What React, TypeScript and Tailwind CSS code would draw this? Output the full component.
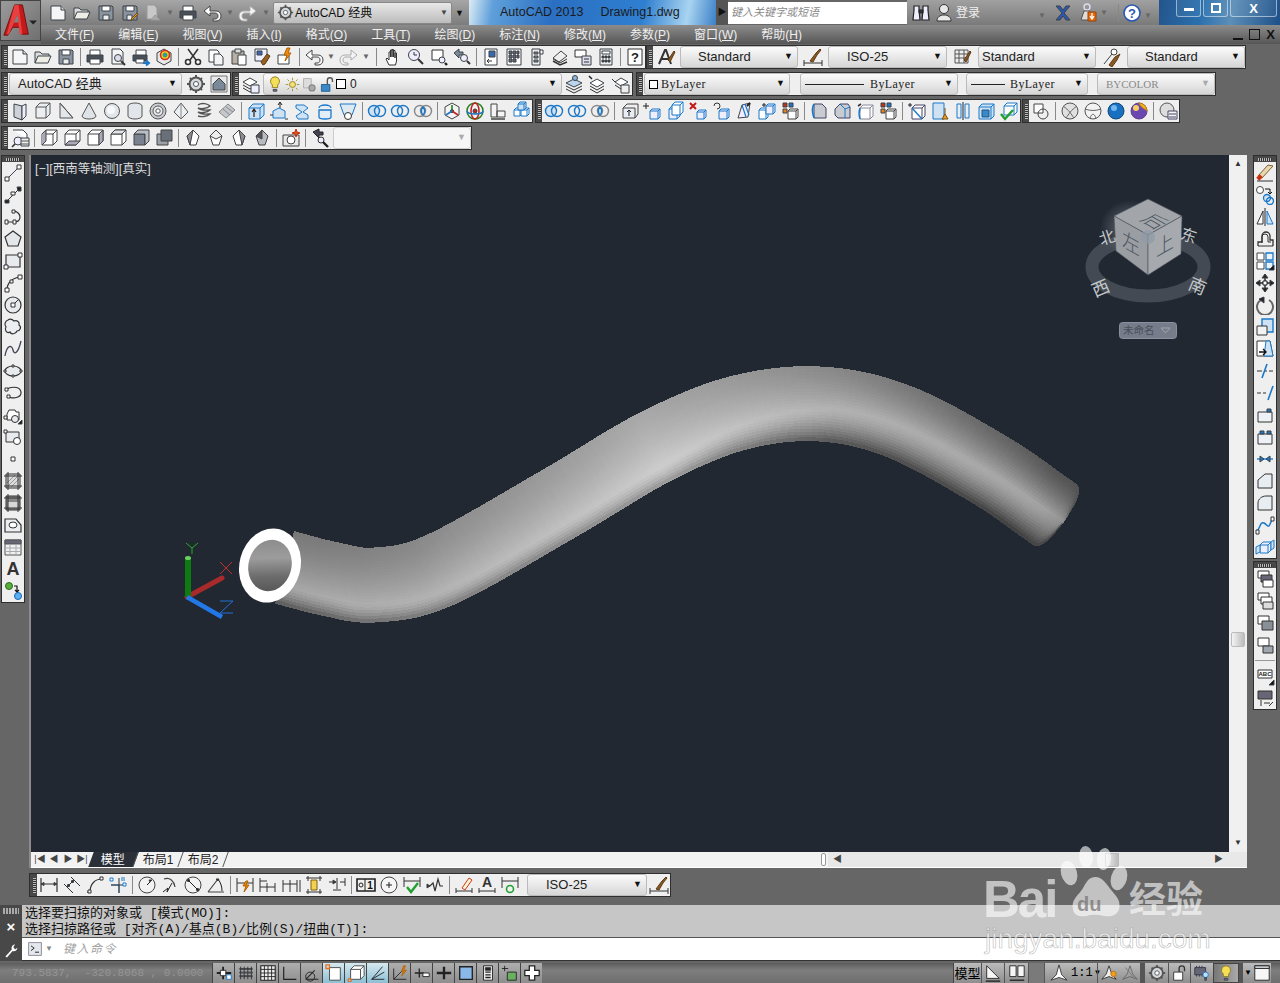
import type { ReactNode } from "react";

type Seg = [string, string?, string?, number?];

const c = (x: number, y: number, r: number) => `M${x - r} ${y}a${r} ${r} 0 1 0 ${2 * r} 0a${r} ${r} 0 1 0 ${-2 * r} 0z`;
const cube = (x: number, y: number, w: number, h: number, d: number) =>
  `M${x} ${y}h${w}v${h}h${-w}zM${x} ${y}l${d} ${-d}h${w}v${h}l${-d} ${d}M${x + w} ${y}l${d} ${-d}`;
const B = "#1b78c8";
const brush: Seg[] = [["M11 13l6-9 1 1-5 10z", "#8a5a24", "#5a3a14"]];
const venn = (f = "none"): Seg[] => [[c(7, 10, 5.5), f, B, 1.4], [c(13, 10, 5.5), "none", B, 1.4]];

const ICONS: Record<string, Seg[]> = {
  new: [["M3 3h10l4 4v10H3z", "#f6f6f6"], ["M13 3v4h4", "#d8d8d8"]],
  open: [["M2 16V5h5l2 2h7v2", "#ddd"], ["M2 16l3-7h13l-3 7z", "#eeeee6"]],
  save: [["M3 3h13l1 1v13H3z", "#8a94a0"], ["M6 3h8v5H6z", "#fff"], ["M7 12h6v5H7z", "#eee"]],
  saveas: [["M3 3h13l1 1v13H3z", "#8a94a0"], ["M6 3h8v5H6z", "#fff"], ["M7 12h5v5H7z", "#eee"], ["M11 16l6-6 1 1-6 6z", "#e8a020", "#7a5010"]],
  plotg: [["M4 2h7l3 3v11H4z", "#c8c8c8", "#999"], ["M8 17l4-5 5 5z", "#aaa", "#999"]],
  print: [["M5 8V3h10v5", "#fff"], ["M2 8h16v7H2z", "#4a5058"], ["M5 12h10v5H5z", "#fff"]],
  preview: [["M4 2h8l3 3v12H4z", "#f4f4f4"], [c(10, 11, 3.5), "#dde"], ["M13 14l4 4", "none", "#333", 2]],
  plot: [["M5 8V3h10v5", "#fff"], ["M2 8h14v6H2z", "#4a5058"], ["M5 12h8v4H5z", "#fff"], ["M12 16h5M15 13.5l3 2.5-3 2.5", "none", B, 2]],
  publish: [["M10 2l7 4v8l-7 4-7-4V6z", "#e8e8e8"], [c(11, 8, 4.5), "#f4d020", "#d03020", 1.6], [c(11, 8, 2), "#3090d0", "#30a050"]],
  cut: [["M5 2l8 11M15 2L7 13", "none", "#333", 1.5], [c(5, 15, 2.5), "#fff", "#333", 1.6], [c(15, 15, 2.5), "#fff", "#333", 1.6]],
  copy: [["M3 3h8l2 2v10H3z", "#fff"], ["M8 7h6l3 3v8H8z", "#f4f4f4"]],
  paste: [["M3 4h12v13H3z", "#b8b0a0"], ["M6 2h6v4H6z", "#ddd"], ["M9 8h8v10H9z", "#fff"]],
  match: [["M3 2h12v12H3z", "#eef"], ["M5 4h5v4H5z", "#3a68b0"], ["M11 18l-2-3 6-8 3 2-5 8z", "#9a6020", "#5a3a14"]],
  bedit: [["M3 8h11v9H3z", "#fff"], ["M12 1l-3 7h3l-2 6 6-8h-3l2-5z", "#f08a10", "#b06000"]],
  undo: [["M8 3L2 8l6 5v-3h5c2 0 3 1 3 3s-1 3-3 3h-2v2h3c3 0 5-2 5-5s-2-5-5-5H8z", "#fff", "#444"]],
  redo: [["M12 3l6 5-6 5v-3H7c-2 0-3 1-3 3s1 3 3 3h2v2H6c-3 0-5-2-5-5s2-5 5-5h6z", "#f4f4f4", "#aaa"]],
  pan: [["M6 18l-3-6 1-1 2 2V5h1.5v5V3H9v7V2.5h1.5V10 3.5H12V11 6h1.5v8l-1 4z", "#fff", "#333"]],
  zrt: [[c(8, 8, 5.5), "#eef"], ["M8 5v3h3", "none", "#333"], ["M12 12l5 5", "none", "#333", 2]],
  zwin: [["M3 3h11v10H3z", "#fff", "#333"], [c(13, 13, 3), "#eef"], ["M16 16l2 2", "none", "#222", 2.4]],
  zprev: [["M2 6l5-4v3h4v3H7v3z", "#7a8a9a"], [c(12, 11, 3.5), "#eef"], ["M15 14l3 3", "none", "#333", 2]],
  props: [["M4 2h12v16H4z", "#fff"], ["M8 4h6v6H8z", "#3a68b0"], ["M11 14H6M8 12l-2 2 2 2", "none", "#333"]],
  dc: [["M3 2h14v16H3z", "#fff"], ["M5 4h3v3H5zM9 4h3v3H9zM13 4h2v3h-2zM5 8h3v3H5zM9 8h3v3H9zM13 8h2v3h-2zM5 12h3v3H5zM9 12h3v3H9z", "#667"]],
  tp: [["M5 2h8v16H5z", "#eee"], ["M13 3h3v4h-3z", "#fff"], ["M7 5h4v2H7zM7 9h4v2H7zM7 13h4v2H7z", "#889"]],
  ssm: [["M3 11l8-7 6 5-8 6z", "#eee"], ["M3 14l7 4 7-3", "none", "#333", 1.5], ["M3 12l7 4 7-4", "none", "#333"]],
  markup: [["M2 3h11v7H2z", "#fff", "#333"], ["M9 9h9v9H9z", "#dde"], ["M11 12h5M11 15h5", "none", "#333"]],
  calc: [["M4 2h12v16H4z", "#eee"], ["M6 4h8v3H6z", "#fff"], ["M6 9h2v2H6zM9 9h2v2H9zM12 9h2v2h-2zM6 13h2v2H6zM9 13h2v2H9zM12 13h2v2h-2z", "#444"]],
  help: [["M3 2h14v16H3z", "#fff", "#333"], ["T10,15,13,?", "#222"]],
  astyle: [["M2 17L8 3h1l5 14M5 12h7", "none", "#333", 2], ...brush],
  dstyle: [["M1 13v6M19 13v6M1 16h18", "none", "#333"], ["M7 14l6-8 4-4 1 1-4 5-4 7z", "#8a5a24", "#5a3a14"]],
  tstyle: [["M2 3h13v13H2zM2 7h13M2 11h13M6 3v13M11 3v13", "#eee", "#555"], ...brush],
  mstyle: [[c(12, 5, 3), "#fff", "#444"], ["M10 7l-8 10", "none", "#444"], ["M7 18l6-8 5-3-3 6-5 7z", "#8a5a24", "#5a3a14"]],
  gear: [[c(10, 10, 6.5), "#d4d8dc", "#555", 2], [c(10, 10, 2.5), "#fff", "#555"], ["M10 1v3M10 16v3M1 10h3M16 10h3M4 4l2 2M14 14l2 2M16 4l-2 2M4 16l2-2", "none", "#555", 2]],
  wssave: [["M2 2h16v16H2z", "#e8e8e8", "#777"], ["M10 4l6 6v6H4v-6z", "#7a8a9a"]],
  layer: [["M2 8l7-4 7 4-7 4z", "#fff"], ["M2 11l7 4 7-4M2 14l7 4 7-4", "none", "#333"], ["M10 11h8v8h-8z", "#eef"]],
  lamp: [["M10 2a5 5 0 0 1 3 9v3H7v-3a5 5 0 0 1 3-9z", "#f6df58", "#8a7a20"], ["M8 16h4v2H8z", "#778"]],
  sun: [[c(10, 10, 3.5), "#f6e070", "#8a7a20"], ["M10 2v3M10 15v3M2 10h3M15 10h3M4 4l2 2M14 14l2 2M16 4l-2 2M4 16l2-2", "none", "#a08a20"]],
  freeze: [["M3 3h9v11H3z", "#ddd", "#aaa"], [c(13, 14, 3.5), "#aaa", "#888", 1.5]],
  lock: [["M4 10h10v8H4z", "#3a88c8", "#1a5888"], ["M11 10V5a3 3 0 0 1 6 0v2", "none", "#555", 1.6]],
  lmake: [["M2 9l8-4 8 4-8 4z", "#bcd4ee"], ["M2 12l8 4 8-4M2 15l8 4 8-4", "none", "#333"], [c(11, 4, 2.5), "#8fb6e0"]],
  lcur: [["M3 9l7-4 7 4-7 4z", "#fff"], ["M3 12l7 4 7-4M3 15l7 4 7-4", "none", "#333"], ["M5 5L2 2", "none", "#222", 1.5]],
  lprev: [["M5 8l6-4 7 4-7 4z", "#fff"], ["M5 11l6 4 7-4", "none", "#333"], ["M11 11h8v8h-8z", "#eee"], ["M2 5l3 3", "none", "#333"]],
  psolid: [["M4 3l8 2v14l-8-3z", "#cdd2d8"], ["M12 5l4-2v12l-4 4z", "#eef"]],
  box: [[cube(3, 6, 10, 11, 4), "#eceff2", "#555"]],
  wedge: [["M4 2v15h13z", "#e4e7ea", "#555"], ["M4 2l13 15", "none", "#555"]],
  cone: [["M10 2L3 15a7 3 0 0 0 14 0z", "#dfe2e6", "#555"]],
  sphere: [[c(10, 10, 7.5), "#e2e6ea", "#555"], [c(9, 9, 4), "#f8f8f8", "none"]],
  cyl: [["M3 5a7 3 0 0 1 14 0v10a7 3 0 0 1-14 0z", "#e2e6ea", "#555"]],
  torus: [[c(10, 10, 8), "#c8ccd2", "#555"], [c(10, 10, 5), "#eee", "#555"], [c(10, 10, 2.2), "#fff", "#555"]],
  pyr: [["M10 2L3 11l7 7 7-7z", "#eceff2", "#555"], ["M10 2v16", "none", "#888"]],
  helix: [["M4 4c4-3 10-1 12 1-3 3-10 3-12 2 3 3 9 2 12 2-3 3-10 3-12 2 3 3 9 2 12 2-3 3-9 3-12 2", "none", "#555", 1.4]],
  planar: [["M2 11l9-8 7 6-9 8z", "#c4c8cc", "#888"], ["M6 8l7 6M9 6l7 5", "none", "#888"]],
  extr: [[cube(3, 7, 11, 11, 4), "#cfe2f4", B], ["M8 16V9M6 11l2-3 2 3", "none", "#222", 1.2]],
  press: [["M4 10l6-3 6 3v7H4z", "#cfe2f4", B], ["M11 7V2M9 4l2-3 2 3", "none", "#222"], ["M1 14h3M16 18h3", "none", "#333"]],
  sweep: [["M4 4h8l4 3-5 4 5 3v4H6l-2-3 6-4-6-4z", "#cfe2f4", B]],
  rev: [["M4 7a6 3 0 0 1 12 0M4 9h12v7a6 2 0 0 1-12 0z", "#e3eef8", B, 1.3]],
  loft: [["M2 3h16l-4 11H6z", "#dfe9f2", B], [c(10, 15, 3.5), "#fff", "#333"]],
  union: venn("#cfe2f4"),
  subt: venn(),
  inters: [[c(7, 10, 5.5), "none", "#888", 1.4], [c(13, 10, 5.5), "none", "#888", 1.4], ["M10 6a5.5 5.5 0 0 1 0 8 5.5 5.5 0 0 1 0-8z", "#cfe2f4", B, 1.4]],
  gizmo: [["M10 2l7 4v8l-7 4-7-4V6z", "#f4f4f4", "#444"], [c(10, 10, 1.5), "#444"], ["M10 10v-6", "none", "#208020", 1.6], ["M10 10l6 4", "none", "#c02020", 1.6], ["M10 10l-6 4", "none", B, 1.6]],
  gizrot: [[c(10, 10, 8), "none", "#208020", 1.5], ["M10 2a4 8 0 0 1 0 16 4 8 0 0 1 0-16z", "none", "#c02020", 1.5], ["M2 10a8 3 0 0 0 16 0", "none", B, 1.5], [c(10, 10, 2), "#c02020"]],
  align3: [["M3 3h6v13H3zM9 10h8v6H9z", "#f4f4f4", "#444"], ["M3 18h14", "none", "#444", 1.5]],
  arr3: [[cube(3, 9, 6, 6, 2), "#fff", B], [cube(10, 9, 6, 6, 2), "#fff", B], [cube(7, 3, 6, 6, 2), "#cfe2f4", B]],
  eface: [["M4 7h12v10H4z", "#e8eef4", "#444"], ["M4 7l4-4h11v10l-3 4", "none", "#444"], ["M10 15V9M8 11l2-2 2 2", "none", "#222"]],
  mvface: [["M1 5h6M4 2v6", "none", "#222"], [cube(8, 10, 8, 8, 2), "#eef", B]],
  cpface: [[cube(4, 8, 8, 10, 3), "#eef", B], [cube(7, 4, 8, 10, 3), "#fff", B]],
  xface: [["M2 2l6 6M8 2L2 8", "none", "#c01818", 2], [cube(9, 11, 7, 7, 2), "#eef", B]],
  rface: [["M3 5a3 3 0 1 1 3 3", "none", "#333"], [cube(8, 10, 8, 8, 2), "#eef", B]],
  tface: [["M4 17L8 4l8-2-2 14z", "#eef", "#444"], ["M8 4l4 12M11 3l4 11", "none", B, 1.2], ["M13 5l3-3", "none", "#222", 2]],
  cp2: [[cube(2, 9, 7, 9, 2), "#fff", B], [cube(9, 5, 7, 8, 2), "#eef", B], ["M7 2v4M5 4h4", "none", "#222"]],
  dots: [["M3 2h4v4H3z", "#c03018"], ["M9 2h4v4H9z", B], ["M3 8h4v4H3z", "#e88020"], [cube(8, 10, 8, 8, 2), "#fff", "#444"]],
  ededge: [["M5 3h8l4 4v10H5z", "#c8ccd0", "#446"], ["M5 3c-2 3-2 8 0 14", "none", B, 1.6]],
  chface: [["M3 8l5-5h8l2 3v11H6l-3-3z", "#c8ccd0", "#446"], ["M8 3l5 5v9M13 8l5-2", "none", B]],
  cpedge: [["M3 5l3-2", "none", "#333", 1.6], [cube(5, 7, 10, 11, 3), "#fff", "#889"], ["M5 7c-1 3-1 8 0 11", "none", B, 1.5]],
  imprint: [["M1 4h4M3 2v4", "none", "#222"], [cube(5, 7, 10, 11, 3), "#fff", "#446"], ["M5 7l10 11", "none", B, 1.4]],
  clean: [["M3 2h11v16H3z", "#cfe2f4", B], ["M15 7v6M12 18l3-5 3 5z", "#e8a020", "#7a5010"]],
  sep3: [["M4 3h4v14H4zM12 3h4v14h-4z", "#e8eef4", B], ["M10 1v18", "none", "#222", 1]],
  shell: [[cube(3, 6, 12, 12, 3), "#cfe2f4", B], ["M6 9h7v7H6z", "#3a88c8", "#1a5888"]],
  check: [[cube(5, 5, 10, 9, 3), "#fff", B], ["M2 13l4 5 8-9", "none", "#20a030", 2.4]],
  inter2: [["M3 3h9v9H3z", "#fff", "#444"], [c(12, 13, 5), "none", "#444"]],
  wire: [[c(10, 10, 8), "#e0e0e0", "#555"], ["M3 5c6 4 8 8 11 12M17 5c-6 4-8 8-11 12", "none", "#666"]],
  hidden: [[c(10, 10, 8), "#f2f2f2", "#555"], ["M2 8c6 2 10 2 16 0M7 17c2-5 4-5 6 0", "none", "#666"]],
  rblue: [[c(10, 10, 8), "#1a70c0", "#104878"], [c(8, 7, 3), "#70b8ee", "none"]],
  rgold: [[c(10, 10, 8), "#6a48b0", "#604090"], ["M10 2a8 8 0 0 1 8 8c-3-3-6-3-8-8z", "#f0b020", "#c08010"], [c(7, 7, 3), "#f8d060", "none"]],
  vstyle: [[c(9, 9, 7), "#ddd", "#555"], ["M10 10h9v8h-9z", "#f4f4f4", "#446"], ["M11 13h7M11 16h7", "none", "#446"]],
  uopen: [["M3 2h10l4 4v5", "#fff"], [c(8, 13, 4), "#eef"], ["M2 19l3-3", "none", "#333", 1.6], ["M11 10h8v8h-8z", "#eee"], ["M11 13h8M11 16h8", "none", "#555"]],
  v1: [[cube(3, 6, 11, 11, 4), "#fff", "#444"], ["M3 6l4-4v11l-4 4", "#aab", "#444"]],
  v2: [[cube(3, 6, 11, 11, 4), "#fff", "#444"], ["M3 17l4-4h11l-4 4z", "#aab", "#444"]],
  v3: [[cube(3, 6, 11, 11, 4), "#fff", "#444"], ["M14 6l4-4v11l-4 4z", "#aab", "#444"]],
  v4: [[cube(3, 6, 11, 11, 4), "#fff", "#444"], ["M3 6l4-4h11l-4 4z", "#e0e2e6", "#444"]],
  v5: [["M3 6h11v11H3z", "#7a8290", "#444"], ["M3 6l4-4h11v11l-4 4V6z", "#b8bec6", "#444"]],
  v6: [["M3 6h11v11H3z", "#9aa0aa", "#444"], ["M7 2h11v11H7z", "#6a707a", "#444"]],
  iso1: [["M10 2l6 6-3 9H7L4 8z", "#fff", "#444"], ["M10 2L7 17 4 8z", "#8a8e94", "#444"]],
  iso2: [["M10 2l6 6-3 9H7L4 8z", "#fff", "#444"], ["M10 2l6 6-6 3-6-3z", "#eee", "#444"]],
  iso3: [["M10 2l6 6-3 9H7L4 8z", "#fff", "#444"], ["M10 2l6 6-3 9z", "#8a8e94", "#444"]],
  iso4: [["M10 2l6 6-3 9H7L4 8z", "#b8bcc2", "#444"], ["M10 2v9l-6-3z", "#555", "#444"]],
  camera: [["M2 7h16v11H2z", "#e8e8e8", "#444"], [c(10, 12, 4), "#fff", "#444"], ["M14 4l1-3 1 3 3 1-3 1-1 3-1-3-3-1z", "#e85010", "#c03010"]],
  search: [["M3 4l6-3v3h4v3H9v3z", "#445", "#222"], [c(11, 12, 3), "#eef", "#333"], ["M13 14l5 5", "none", "#222", 2.4]],
  line: [["M4 16L16 4", "none", "#445"], ["M2 14h4v4H2zM14 2h4v4h-4z", "#fff", "#333"]],
  xline: [["M3 17L17 3", "none", "#333"], ["M2 15h4v3H2z", "#222"], ["M14 2h4v4h-3z", "#222"], ["M8 10h4v-3h-4z", "#fff", "#333"]],
  pline: [["M4 15h7c5 0 6-3 6-5s-2-6-7-6", "none", "#333", 1.2], ["M2 13h3v4H2zM10 13h3v4h-3zM9 3h3v3H9z", "#fff", "#333"]],
  polygon: [["M10 2l8 6-3 9H5L2 8z", "#e4e7ea", "#333", 1.2]],
  rect: [["M3 4h14v12H3z", "#e8eaee", "#333", 1.2], ["M1 14h4v4H1zM15 2h4v4h-4z", "#fff", "#333"]],
  arc: [["M4 17C4 10 9 5 17 4", "none", "#333", 1.2], ["M2 15h4v4H2zM15 2h4v4h-4zM7 7h3v3H7z", "#fff", "#333"]],
  circle: [[c(10, 10, 8), "#e8eaee", "#333", 1.2], ["M10 10l5-5", "none", "#333"], ["M8 8h4v4H8z", "#fff", "#333"]],
  cloud: [["M5 3c3-2 5 0 6 1 3-1 6 1 5 4 3 2 1 6-2 6-1 3-6 4-7 1-3 2-6-2-4-5-2-2-1-6 2-7z", "#eceef2", "#333", 1.2]],
  spline: [["M2 17C4 5 9 6 10 11s5 4 8-9", "none", "#445", 1.3]],
  ellipse: [["M2 10a8 5 0 1 0 16 0a8 5 0 1 0-16 0z", "#e8eaee", "#333", 1.2], ["M1 9h2v2H1zM17 9h2v2h-2zM9 4h2v2H9zM9 14h2v2H9z", "#fff", "#333"]],
  ellarc: [["M4 7c0-3 13-5 14 2s-12 7-13 4", "none", "#333", 1.2], ["M2 5h3v3H2zM4 12h3v3H4z", "#fff", "#333"]],
  insert: [["M6 5h6l1 2h3v8H4V9z", "#fff", "#333"], [c(12, 14, 3.5), "#e8eaee", "#333"], ["M1 11h3v3H1z", "#fff", "#333"], ["M15 19l4-4v4z", "#111"]],
  block: [["M3 5h13v10H3z", "#e8eaee", "#333"], [c(14, 14, 3.5), "#fff", "#333"], ["M1 3h3v3H1z", "#fff", "#333"]],
  point: [["M8 8h4v4H8z", "#fff", "#333"]],
  hatch: [["M3 3h14v14H3z", "#ddd", "#333"], ["M5 15L15 5M8 16l8-8M4 12l8-8", "none", "#999", 1], ["M1 5h18M1 15h18M5 1v18M15 1v18", "none", "#333"]],
  grad: [["M3 3h14v14H3z", "#888", "#333"], ["M5 9h10v6H5z", "#d8d8d8", "none"], ["M1 5h18M1 15h18M5 1v18M15 1v18", "none", "#333"]],
  region: [["M2 4h11l5 6v7H2z", "#eceef2", "#333", 1.2], ["M6 10a4 3 0 1 0 8 0a4 3 0 1 0-8 0z", "#fff", "#333"]],
  table: [["M2 3h16v15H2z", "#eef0f2", "#555"], ["M2 3h16v4H2z", "#667", "#555"], ["M2 11h16M2 14.5h16M7 7v11M13 7v11", "none", "#aaa"]],
  mtext: [["T10,16,18,A", "#333"]],
  addsel: [[c(6, 5, 3.5), "#5aae3a", "#2a6a1a"], [c(15, 15, 3.5), "#5ab0f0", "#1a68b0"], ["M11 5h3v5M12 9l2 2 2-2", "none", "#111", 1.2]],
  erase: [["M3 13l10-11 5 1-11 12z", "#e8d8b0", "#7a6030"], ["M3 13l3 3", "none", "#c83010", 5], ["M2 18h16", "none", "#333"]],
  copyobj: [[c(5, 5, 3.5), "#fff", "#444"], [c(12, 13, 3.5), "#cfe2f4", B, 1.3], [c(15, 16, 3.5), "none", B, 1.3], ["M10 4h5v4M13 7l2 2 2-2", "none", "#111"]],
  mirror: [["M8 4v13H2z", "#fff", "#333"], ["M12 4v13h6z", "#cfe2f4", B], ["M10 1v18", "none", "#222", 1]],
  offset: [["M3 17v-4h4V7a4 4 0 0 1 8 0v4h3v6", "none", "#333", 1.3], ["M3 17h15M7 14V8a3 3 0 0 1 6 0v5h3", "none", "#333"]],
  array: [["M2 2h7v7H2zM2 11h7v7H2z", "#fff", "#444"], ["M11 2h7v7h-7zM11 11h7v7h-7z", "#eaf2fa", B, 1.3], ["M14 19l5-5v5z", "#111"]],
  move: [["M10 1v18M1 10h18", "none", "#222", 1.4], ["M10 1L7 5h6zM10 19l-3-4h6zM1 10l4-3v6zM19 10l-4-3v6z", "#222"], ["M8 8h4v4H8z", "#fff", "#222"]],
  rotate: [["M6 5a8 8 0 1 0 8 0", "none", "#666", 2], ["M9 2v6L4 4z", "#222"]],
  scale: [["M7 2h11v13H7z", "#cfe2f4", B, 1.4], ["M2 9h10v9H2z", "#f2f2f2", "#333"]],
  stretch: [["M2 2h7l6 0 3 15H2z", "#fff", "#333"], ["M11 2l4 0 3 15H9z", "#cfe2f4", B], ["M4 13h7M8 10l3 3-3 3", "none", "#111", 1.4]],
  trim: [["M2 10h5M9 10h3M14 10h4", "none", "#333", 1.2], ["M7 17l5-14", "none", B, 1.6]],
  extend: [["M2 10h4M8 10h3", "none", "#333", 1.2], ["M13 17l5-14", "none", B, 1.6]],
  brk1: [["M3 7h14v10H3z", "#eef2f6", "#333"], ["M12 4h4v3h-4z", B]],
  brk2: [["M3 7h14v10H3z", "#eef2f6", "#333"], ["M5 4h4v3H5zM12 4h4v3h-4z", B]],
  join: [["M2 10h16", "none", B, 1.4], ["M5 7l4 3-4 3zM15 7l-4 3 4 3z", B]],
  chamfer: [["M3 17V9l7-6h7v14z", "#e8edf2", "#333"]],
  fillet: [["M3 17V10c0-4 4-7 8-7h6v14z", "#e8edf2", "#333"]],
  edspl: [["M2 16c3-2 3-10 7-8s4 8 8-4", "none", B, 1.5], ["M1 15h3v4H1zM16 2h3v4h-3z", "#fff", "#333"]],
  explode: [[cube(5, 8, 8, 8, 3), "#eef", B], ["M1 10l4-2v7l-4 2zM16 5l3-2v8l-3 2z", "#cfe2f4", B]],
  do1: [["M3 2h11v7H3z", "#fff", "#333"], ["M6 6h11v7H6z", "#667", "#333"], ["M8 11h10v7H8z", "#fff", "#333"]],
  do2: [["M3 2h11v7H3z", "#fff", "#333"], ["M6 6h11v7H6z", "#fff", "#333"], ["M8 11h10v7H8z", "#ddd", "#333"]],
  do3: [["M3 3h11v8H3z", "#fff", "#333"], ["M7 8h11v9H7z", "#8a9098", "#333"]],
  do4: [["M3 3h11v8H3z", "#fff", "#333"], ["M8 11h10v7H8z", "#a0a6ae", "#333"]],
  tfront: [["M3 4h14v8H3z", "#fff", "#333"], ["T10,10,6,ABC", "#222"], ["M14 19l5-5v5z", "#111"]],
  hback: [["M3 3h14v8H3z", "#667", "#333"], ["M9 15h6M6 12v6M14 18l4-4", "none", "#333"]],
  dlin: [["M2 3v14M18 3v14M2 9h16", "none", "#333", 1.2], ["M2 9l3-1.5v3zM18 9l-3-1.5v3z", "#333"]],
  dali: [["M2 9l9 9M9 2l9 9M5 12l7-7", "none", "#333"], ["M5 12l1-3 2 2zM12 5l-1 3-2-2z", "#333"]],
  darc: [["M2 17h3M5 17C5 9 10 4 17 4", "none", "#333", 1.2], ["M3 15h3v3H3zM15 2h3v3h-3z", "#fff", "#333"]],
  dord: [["M3 10h8v8M14 2v4M16 2v4", "none", B, 1], ["M3 10h14M11 3v15", "none", "#333"], ["M2 3h3v3H2zM15 8h3v3h-3z", "#fff", B]],
  drad: [[c(10, 10, 8), "#f2f2f2", "#444"], ["M10 10l5-5", "none", "#222"], ["M15 5l-3 0 1 2z", "#222"]],
  djog: [["M4 4c6-2 10 2 11 8", "none", "#444", 1.2], ["M3 17l5-4-1 4 5-9", "none", "#222"]],
  ddia: [[c(10, 10, 8), "#f2f2f2", "#444"], ["M4 4l12 12", "none", "#222"], ["M4 4l1 3 2-2zM16 16l-1-3-2 2z", "#222"]],
  dang: [["M2 17h16M2 17L12 4", "none", "#444", 1.2], ["M12 4c3 4 4 8 4 12", "none", "#222"], ["M13 4l-3 0 2 2z", "#222"]],
  dqk: [["M2 3v14M18 3v14M2 8h16", "none", "#333"], ["M11 6l-3 5h3l-2 6 5-7h-3l2-4z", "#f08a10", "#b06000"]],
  dbase: [["M2 3v14M9 8v9M17 8v9M2 12h15M2 6h7", "none", "#333"]],
  dcont: [["M2 5v12M9 5v12M16 5v12M2 9h7M9 9h7", "none", "#333"], ["M19 5v12", "none", "#333"]],
  dspc: [["M2 3h16M2 17h16M4 1v5M16 1v5M4 14v5M16 14v5", "none", "#333"], ["M7 5h6v10H7z", "#f2d050", "#806010"]],
  dbrk: [["M2 7h7M13 7h5M18 3v8M10 14V3M6 15h8", "none", "#333"], ["M9 7l-3-2v4z", "#333"]],
  dtol: [["M1 4h18v12H1z", "#f0f0f0", "#222", 1.6], ["M9 4v12", "none", "#222"], [c(5, 10, 2), "none", "#222"], ["T14,14,10,1", "#111"]],
  dctr: [[c(10, 10, 8), "#f6f6f6", "#444"], ["M7 10h6M10 7v6", "none", "#222"]],
  dins: [["M2 2v10M18 2v10M2 6h16", "none", "#333"], ["M5 12l4 5 7-9", "none", "#20a030", 2.4]],
  dj2: [["M2 11h3l3-3 2 8 3-12 2 7h3", "none", "#333", 1.2], ["M2 9l3 2-3 2z", "#333"]],
  ded: [["M2 13v5M18 13v5M2 16h16", "none", "#333"], ["M8 13L15 3l3 2-7 10z", "#f4f4d0", "#d03818"]],
  dte: [["T10,12,14,A", "#333"], ["M2 13v5M18 13v5M2 16h16", "none", "#333"]],
  dup: [["M2 2v11M18 2v11M2 6h16", "none", "#333"], [c(10, 14, 3.5), "none", "#20a030", 1.6]],
  sinf: [["M2 10h16M9 3v14", "none", "#222", 2], ["M6 7h6v6H6z", "#fff", "#222"], ["M13 12h5v5h-5z", "#fff", B]],
  sdots: [["M3 5h14v1H3zM3 9h14v1H3zM3 13h14v1H3z", "#888"], ["M4 3v14M8 3v14M12 3v14M16 3v14", "none", "#333", 1]],
  sgrid: [["M2 2h16v16H2z", "#eee", "#222", 1.2], ["M6 2v16M10 2v16M14 2v16M2 6h16M2 10h16M2 14h16", "none", "#222"]],
  sortho: [["M3 3v14h14", "none", "#222", 1.3]],
  spolar: [["M3 17h14M3 17l10-10", "none", "#222", 1.2], [c(8, 14, 5), "none", "#222"]],
  siso: [["M5 4h12v14H5z", "#fff", "#444"], ["M1 1h4v4H1z", "none", "#e07020", 1.4]],
  s3d: [[cube(4, 6, 11, 11, 4), "#fff", "#444"], [c(3, 18, 1.8), "none", "#e07020", 1.4]],
  strack: [["M3 17l14-8M3 17h14M3 17L15 3", "none", "#222", 1]],
  sdyn: [["M3 17V5M3 17h14M3 17l9-9", "none", "#222"], ["M14 2l-2 6h2l-2 5 5-6h-3l2-5z", "#f08a10", "#b06000"]],
  sdu: [["M2 10h10M7 5v10", "none", "#222", 1.4], ["M11 10h7v4h-7z", "#fff", "#222"]],
  slw: [["M2 10h16M10 3v14", "none", "#222", 2.6]],
  strans: [["M3 3h14v14H3z", "#8ab8e8", "#222", 1.5]],
  qp: [["M5 2h10v16H5z", "#eee", "#222"], ["M7 4h6v3H7z", "#222"], ["M7 9h6M7 12h6M7 15h6", "none", "#222", 1.5]],
  ssel: [["M1 5h7M4 2v6", "none", "#222"], ["M7 9h10v9H7z", "#6ab060", "#222"]],
  samo: [["M7 2h6v5h5v6h-5v5H7v-5H2V7h5z", "#fff", "#222", 1.4]],
  smodel: [["M3 2v14h14z", "#f6f6f6", "#222"], ["M2 19h16", "none", "#222", 1.5]],
  slayout: [["M2 2h7v12H2zM11 2h7v12h-7z", "#f6f6f6", "#222"], ["M2 18h16", "none", "#222", 1.5]],
  anno: [["M10 1l3 11 6 6-9-3-9 3 6-6z", "#fff", "#333"]],
  annovis: [["M10 2l3 9 5 6-8-3-8 3 5-6z", "#eee", "#333"], [c(15, 11, 3), "#f0a020", "#c07010"]],
  annoadd: [["M10 2l3 9 5 6-8-3-8 3 5-6z", "none", "#666"], ["M5 4l10 12", "none", "#777"]],
  wslock: [["M3 9h10v9H3z", "#fff", "#333"], ["M9 9V5a3 3 0 0 1 6 0v3", "none", "#333", 1.5]],
  hw: [["M2 4h12v8H2z", "#667", "#334"], ["M4 2v2M7 2v2M10 2v2M4 12v2M7 12v2M10 12v2", "none", "#334"], [c(14, 12, 3), "#bfe0f8", B], ["M13 15h2v3h-2z", "#667"]],
  win: [["M2 2h16v16H2z", "#f6f6f6", "#222"], ["M2 2h16v3H2z", "#c8ccd0", "#222"]],
  binoc: [["M3 3h5v4l1 10H2l1-10zM12 3h5v4l1 10h-7l1-10z", "#eef", "#222", 1.2], ["M8 7h4v3H8z", "#334", "#222"]],
  user: [[c(10, 6, 4.5), "#e8e8e8", "#333"], ["M3 18c0-4 3-6 7-6s7 2 7 6z", "#e8e8e8", "#333"]],
  exch: [["M3 3l6 7-6 7h4l3-4 3 4h4l-6-7 6-7h-4l-3 4-3-4z", "#2a58b0"]],
  cart: [[c(9, 4, 3), "none", "#dde", 1.4], ["M3 17l3-9h6l3 9z", "#ddd", "#555"], ["M10 9h8v9h-8z", "#e06a10", "#a04000"], ["M14 10v5M12 13l2 3 2-3", "none", "#fff", 1.3]],
  qhelp: [[c(10, 10, 8), "#fff", "#2a58b0", 1.6], ["T10,15,13,?", "#2a58b0"]],
  wrench: [["M3 17L11 8c-1-3 1-6 4-6l-2 3 2 3 3-2c0 3-3 5-6 4l-7 8z", "#fff", "none"]],
  prompt: [["M2 2h16v16H2z", "#e4e8ec", "#778"], ["M5 6l4 3-4 3M10 14h5", "none", "#222", 1.2]],
};

const Ic = ({ n, s = 20 }: { n: string; s?: number }) => (
  <svg width={s} height={s} viewBox="0 0 20 20" className="shrink-0">
    {(ICONS[n] ?? []).map(([d, f, st, w], i) => {
      if (d[0] === "T") {
        const [x, y, size, ...t] = d.slice(1).split(",");
        return (
          <text key={i} x={x} y={y} fontSize={size} textAnchor="middle" fontWeight="700" fill={f} fontFamily="Liberation Sans">
            {t.join(",")}
          </text>
        );
      }
      return <path key={i} d={d} fill={f ?? "none"} stroke={st ?? "#3d4248"} strokeWidth={w ?? 1} />;
    })}
  </svg>
);

const Drop = ({ light }: { light?: boolean }) => (
  <span className={`w-[12px] text-center text-[8px] ${light ? "text-[#ddd]" : "text-[#666]"}`}>▼</span>
);

// row of buttons: 23px per icon, | and || are separators
const Icons = ({ items }: { items: string }) => (
  <>
    {items.split(" ").map((it, i) =>
      it === "|" || it === "||" ? (
        <div key={i} className={`flex h-full shrink-0 items-center justify-center ${it === "|" ? "w-[6px]" : "w-[9px]"}`}>
          <div className="h-[18px] w-px bg-[#888]" />
        </div>
      ) : it === "v" ? (
        <div key={i} className="flex h-full items-center"><Drop /></div>
      ) : (
        <div key={i} className="flex h-full w-[23px] shrink-0 items-center justify-center"><Ic n={it} /></div>
      )
    )}
  </>
);

const Grip = () => (
  <div className="flex h-full w-[6px] shrink-0 items-center justify-center bg-[#484848]">
    <div className="h-[15px] w-[3px] bg-[repeating-linear-gradient(0deg,#bbb_0_1px,#333_1px_2px)]" />
  </div>
);
const HGrip = () => (
  <div className="flex h-[6px] w-full shrink-0 items-center justify-center bg-[#484848]">
    <div className="h-[3px] w-[14px] bg-[repeating-linear-gradient(90deg,#bbb_0_1px,#333_1px_2px)]" />
  </div>
);

const Bar = ({ className, children }: { className: string; children: ReactNode }) => (
  <div className={`flex h-full shrink-0 overflow-hidden border border-[#2e2e2e] bg-[#efefef] ${className}`}>{children}</div>
);

const Combo = ({ className, children, off }: { className: string; children: ReactNode; off?: boolean }) => (
  <div className={`flex h-[22px] shrink-0 items-center rounded-[3px] border border-[#bbb] bg-[linear-gradient(#fbfbfb,#d6d6d6)] text-[13px] text-[#222] ${className}`}>
    {children}
    <span className={`ml-auto pr-[4px] text-[9px] ${off ? "text-[#aaa]" : "text-[#111]"}`}>▼</span>
  </div>
);

const Line = ({ w }: { w: string }) => <div className={`h-px bg-[#222] ${w}`} />;
const Sub = () => <span className="font-['Liberation_Serif'] text-[12px] tracking-[0.4px]">ByLayer</span>;

const TitleBar = () => (
  <div className="flex h-[25px] items-center">
    <div className="flex h-full w-[428px] shrink-0 items-center bg-[linear-gradient(#a6a6a6,#7c7c7c)] pl-[5px]">
      <div className="flex w-[24px] justify-center"><Ic n="new" /></div>
      <div className="flex w-[24px] justify-center"><Ic n="open" /></div>
      <div className="flex w-[24px] justify-center"><Ic n="save" /></div>
      <div className="flex w-[24px] justify-center"><Ic n="saveas" /></div>
      <div className="flex w-[22px] justify-center"><Ic n="plotg" /></div>
      <Drop />
      <div className="flex w-[24px] justify-center"><Ic n="print" /></div>
      <div className="flex w-[24px] justify-center"><Ic n="undo" /></div>
      <Drop />
      <div className="flex w-[24px] justify-center"><Ic n="redo" /></div>
      <Drop />
      <div className="ml-px flex h-[22px] w-[179px] items-center rounded-[2px] border border-[#888] bg-[linear-gradient(#e8e8e8,#bcbcbc)] pl-[3px] text-[12px] text-[#111]">
        <Ic n="gear" s={17} />
        <span className="ml-px">AutoCAD 经典</span>
        <span className="ml-auto pr-[3px] text-[8px] text-[#444]">▼</span>
      </div>
      <div className="flex w-[15px] justify-center text-[9px] leading-[8px] text-[#111]">▼</div>
    </div>
    <div className="flex h-full w-[247px] shrink-0 items-center bg-[linear-gradient(100deg,#dcecf6_0%,#5f9fda_10%,#2a6fc2_34%,#2f7fd0_70%,#a8d4f0_88%,#3b7fc8_100%)] pl-[31px] text-[12.5px] text-[#1b1b1b]">
      <span>AutoCAD 2013</span>
      <span className="ml-[17px]">Drawing1.dwg</span>
    </div>
    <div className="flex h-full w-[12px] shrink-0 items-center justify-center bg-[#555] text-[9px] text-[#111]">▶</div>
    <div className="flex h-[22px] w-[179px] shrink-0 items-center bg-white pl-[3px] text-[11px] italic text-[#8a8a8a]">键入关键字或短语</div>
    <div className="flex h-full w-[252px] shrink-0 items-center bg-[linear-gradient(#a0a0a0,#7a7a7a)] pl-[4px]">
      <Ic n="binoc" />
      <div className="ml-[3px]"><Ic n="user" /></div>
      <span className="ml-[2px] text-[12px] text-[#f0f0f0]">登录</span>
      <span className="ml-[58px]"><Drop /></span>
      <div className="ml-[7px]"><Ic n="exch" /></div>
      <div className="ml-[5px]"><Ic n="cart" /></div>
      <Drop />
      <div className="ml-[8px] h-[18px] w-px bg-[#888]" />
      <div className="ml-[3px]"><Ic n="qhelp" /></div>
      <span className="ml-[2px]"><Drop /></span>
    </div>
    <div className="flex h-full flex-1 gap-[2px] bg-[linear-gradient(100deg,#24558c,#2a70ae_35%,#5c8eb8_60%,#1d4f88)] pl-[17px] pr-[3px]">
      <div className="flex h-[17px] w-[25px] items-center justify-center rounded-b-[3px] border border-t-0 border-white/50 bg-white/5">
        <div className="mt-[3px] h-[3px] w-[10px] bg-white" />
      </div>
      <div className="flex h-[17px] w-[25px] items-center justify-center rounded-b-[3px] border border-t-0 border-white/50 bg-white/5">
        <div className="h-[10px] w-[10px] border-2 border-white" />
      </div>
      <div className="flex h-[17px] flex-1 items-center justify-center rounded-b-[3px] border border-t-0 border-white/50 bg-white/5 text-[13px] font-bold leading-none text-white">X</div>
    </div>
  </div>
);

const MENUS = [["文件", "F"], ["编辑", "E"], ["视图", "V"], ["插入", "I"], ["格式", "O"], ["工具", "T"], ["绘图", "D"], ["标注", "N"], ["修改", "M"], ["参数", "P"], ["窗口", "W"], ["帮助", "H"]];

const MenuBar = () => (
  <div className="flex h-[19px] items-center gap-[24px] bg-[linear-gradient(#8c8c8c,#565656)] pl-[14px] text-[12px] text-[#efefef]">
    {MENUS.map(([t, k]) => (
      <span key={k}>
        {t}(<u>{k}</u>)
      </span>
    ))}
    <div className="ml-auto flex items-center gap-[6px] pr-[5px]">
      <div className="mt-[8px] h-[2px] w-[10px] bg-[#111]" />
      <div className="h-[11px] w-[11px] border border-[#111]" />
      <span className="text-[13px] font-bold leading-none text-[#111]">X</span>
    </div>
  </div>
);

const AppButton = () => (
  <div className="relative h-[41px] w-[41px] shrink-0 border border-[#444] bg-[linear-gradient(135deg,#9a9a9a,#707070)]">
    <svg viewBox="0 0 40 40" className="h-full w-full">
      <path d="M14 4h8l6 30h-7l-1-7h-8l-5 8H3z" fill="#c41a1a" stroke="#701010" />
      <path d="M14 4h4l4 30h-3l-2-20-9 20H6z" fill="#e84040" />
      <path d="M13 22l4-8 1 8z" fill="#808080" />
      <path d="M29 20h8l-4 4z" fill="#222" />
    </svg>
  </div>
);

// tube centreline, page coordinates
const CENTER: [number, number][] = [[285, 567.5], [330, 579], [375, 585], [440, 570], [560, 503], [655, 447], [738, 413], [820, 404], [900, 422], [990, 470], [1044, 507], [1064, 521]];

function samples() {
  const pts: [number, number][] = [];
  for (let i = 0; i < CENTER.length - 1; i++) {
    const p0 = CENTER[Math.max(i - 1, 0)], p1 = CENTER[i], p2 = CENTER[i + 1], p3 = CENTER[Math.min(i + 2, CENTER.length - 1)];
    for (let k = 0; k < 12; k++) {
      const u = k / 12;
      const f = (a: number, b: number, c2: number, d: number) =>
        0.5 * (2 * b + (c2 - a) * u + (2 * a - 5 * b + 4 * c2 - d) * u * u + (3 * b - a - 3 * c2 + d) * u * u * u);
      pts.push([f(p0[0], p1[0], p2[0], p3[0]), f(p0[1], p1[1], p2[1], p3[1])]);
    }
  }
  pts.push(CENTER[CENTER.length - 1]);
  return pts;
}

const lerpTable = (t: number, ys: number[]) => {
  const xs = [0, 0.25, 0.45, 0.65, 0.88, 1];
  for (let i = 0; i < xs.length - 1; i++) {
    if (t <= xs[i + 1]) return ys[i] + ((ys[i + 1] - ys[i]) * (t - xs[i])) / (xs[i + 1] - xs[i]);
  }
  return ys[ys.length - 1];
};

function shade(t: number, s: number) {
  const p = lerpTable(t, [0.45, 0.55, 0.55, 0.1, 0.05, 0]);
  const pk = lerpTable(t, [165, 178, 205, 178, 165, 145]);
  const top = lerpTable(t, [120, 135, 168, 135, 85, 80]);
  const bot = lerpTable(t, [85, 120, 150, 85, 60, 70]);
  const v = s < p ? top + (pk - top) * Math.pow((s + 1) / (p + 1), 1.4) : bot + (pk - bot) * (1 - Math.pow((s - p) / (1 - p), 1.6));
  return Math.round(v);
}

const Tube = () => {
  const pts = samples();
  const n = pts.length;
  const strips = 26;
  const polys: ReactNode[] = [];
  const hw = (i: number) => {
    const t = i / (n - 1);
    const e = t > 0.94 ? (t - 0.94) / 0.06 : 0;
    return 37 * Math.sqrt(Math.max(1 - e * e, 0.02));
  };
  const nor = (i: number) => {
    const a = pts[Math.max(i - 1, 0)], b = pts[Math.min(i + 1, n - 1)];
    const dx = b[0] - a[0], dy = b[1] - a[1], l = Math.hypot(dx, dy) || 1;
    return [-dy / l, dx / l];
  };
  for (let i = 0; i < n - 1; i++) {
    const n0 = nor(i), n1 = nor(i + 1), w0 = hw(i), w1 = hw(i + 1);
    for (let j = 0; j < strips; j++) {
      const s0 = -1 + (2 * j) / strips, s1 = s0 + 2 / strips;
      const o = (p: [number, number], nn: number[], w: number, s: number) => `${(p[0] + nn[0] * w * s).toFixed(1)},${(p[1] + nn[1] * w * s).toFixed(1)}`;
      const g = shade(i / (n - 1), (s0 + s1) / 2);
      const col = `rgb(${g},${g},${g})`;
      polys.push(
        <polygon key={`${i}-${j}`} points={`${o(pts[i], n0, w0, s0)} ${o(pts[i + 1], n1, w1, s0)} ${o(pts[i + 1], n1, w1, s1)} ${o(pts[i], n0, w0, s1)}`} fill={col} stroke={col} strokeWidth={1} />
      );
    }
  }
  return <g shapeRendering="crispEdges">{polys}</g>;
};

const Scene = () => (
  <svg viewBox="31 155 1198 697" className="h-full w-full">
    <defs>
      <linearGradient id="hole" x1="0.2" y1="0" x2="0.45" y2="1">
        <stop offset="0" stopColor="#8a8a8a" />
        <stop offset="0.4" stopColor="#9c9c9c" />
        <stop offset="0.75" stopColor="#6c6c6c" />
        <stop offset="1" stopColor="#5a5a5a" />
      </linearGradient>
      <radialGradient id="glow">
        <stop offset="0" stopColor="#6a7078" />
        <stop offset="1" stopColor="#6a7078" stopOpacity="0" />
      </radialGradient>
    </defs>
    <Tube />
    <g transform="rotate(15 270 565.5)">
      <ellipse cx={270} cy={565.5} rx={30.5} ry={37.5} fill="#fff" />
      <ellipse cx={270} cy={565.5} rx={21.5} ry={26} fill="url(#hole)" />
    </g>
    {/* UCS icon */}
    <path d="M187 597L222 578" stroke="#a82a2a" strokeWidth={5} strokeLinecap="round" />
    <path d="M188 557V597" stroke="#0e7a12" strokeWidth={6} />
    <ellipse cx={188} cy={558} rx={3} ry={2} fill="#6ad060" />
    <path d="M187 597L222 617" stroke="#2378e8" strokeWidth={4.5} />
    <path d="M186 543l6 5 6-5M192 548v6" fill="none" stroke="#20b020" />
    <path d="M220 562l12 12M232 562l-12 12" fill="none" stroke="#c03030" />
    <path d="M220 601h13l-13 12h13" fill="none" stroke="#2070d8" />
    {/* ViewCube */}
    <ellipse cx={1148} cy={267} rx={56} ry={29} fill="none" stroke="#434a53" strokeWidth={13} />
    <ellipse cx={1130} cy={228} rx={30} ry={28} fill="url(#glow)" />
    <path d="M1148 199L1182 216 1148 235 1114 216z" fill="#a2a6aa" stroke="#4a5058" strokeWidth={0.6} />
    <path d="M1114 216L1148 235V275L1116 251z" fill="#9a9ea3" stroke="#4a5058" strokeWidth={0.6} />
    <path d="M1182 216L1148 235V275L1181 254z" fill="#a6aaae" stroke="#4a5058" strokeWidth={0.6} />
    <circle cx={1148} cy={237} r={7} fill="#8f9aa6" opacity={0.7} />
    <g fill="#4a5560" fontFamily="Noto Sans CJK SC" fontSize={21} textAnchor="middle" fontWeight={300}>
      <text transform="matrix(0.85 0.48 -0.85 0.48 1148 225)">后</text>
      <text transform="matrix(0.85 0.48 0 1 1131 251)">左</text>
      <text transform="matrix(0.85 -0.48 0 1 1165 252)">上</text>
    </g>
    <g fill="#c4c7ca" fontFamily="Noto Sans CJK SC" fontSize={17} textAnchor="middle">
      <text transform="matrix(0.9 -0.3 0.3 0.9 1109 243)">北</text>
      <text transform="matrix(0.9 0.3 -0.3 0.9 1187 241)">东</text>
      <text transform="matrix(0.95 -0.4 0.4 0.95 1103 294)">西</text>
      <text transform="matrix(0.95 0.4 -0.4 0.95 1195 292)">南</text>
    </g>
    <rect x={1119.5} y={322.5} width={57} height={16} rx={3} fill="#767c8a" stroke="#8a90a0" />
    <text x={1123} y={334} fontSize={10.5} fill="#4a4e58" fontFamily="Noto Sans CJK SC">未命名</text>
    <path d="M1161 328h9l-4.5 5z" fill="none" stroke="#a0a4b0" />
  </svg>
);

const ScrollV = () => (
  <div className="flex h-full w-[18px] shrink-0 flex-col items-center bg-[#f0f0f0] text-[8px] text-[#333]">
    <span className="mt-[3px]">▲</span>
    <div className="mt-[462px] h-[15px] w-[14px] rounded-[2px] border border-[#bbb] bg-[linear-gradient(90deg,#f4f4f4,#bbb)]" />
    <span className="mb-[3px] mt-auto">▼</span>
  </div>
);

const Tab = ({ t, on }: { t: string; on?: boolean }) => (
  <div className={`flex h-full w-[45px] -skew-x-[20deg] items-center justify-center border-r border-[#555] ${on ? "bg-[#2a2f38] text-white" : "text-[#222]"}`}>
    <span className="skew-x-[20deg] text-[12px]">{t}</span>
  </div>
);

const TabRow = () => (
  <div className="flex h-[16px] shrink-0 items-center border-b border-white bg-[#f2f2f2] text-[9px] text-[#444]">
    <div className="flex h-full w-[60px] shrink-0 items-center pl-[2px]">
      <span className="w-[14px] text-center">|◀</span>
      <span className="w-[14px] text-center">◀</span>
      <span className="w-[14px] text-center">▶</span>
      <span className="w-[14px] text-center">▶|</span>
    </div>
    <Tab t="模型" on />
    <Tab t="布局1" />
    <Tab t="布局2" />
    <div className="ml-[595px] h-[13px] w-[5px] rounded-[2px] border border-[#999] bg-white" />
    <div className="ml-[2px] flex h-[15px] flex-1 items-center bg-[#e8e8e8]">
      <span className="ml-[5px]">◀</span>
      <div className="ml-[263px] h-[14px] w-[14px] border border-[#bbb] bg-[linear-gradient(90deg,#eee,#bbb)]" />
      <span className="ml-auto mr-[24px]">▶</span>
    </div>
  </div>
);

const STATUS_L = ["sinf", "sdots", "sgrid", "sortho", "spolar", "siso", "s3d", "strack", "sdyn", "sdu", "slw", "strans", "qp", "ssel", "samo"];

const StatusBar = () => (
  <div className="flex h-[20px] items-center bg-[linear-gradient(#5c5c5c,#7e7e7e_35%,#6e6e6e)]">
    <div className="w-[212px] shrink-0 whitespace-pre pl-[12px] font-['Liberation_Mono'] text-[11px] text-[#959595]">793.5837,  -320.8068 , 0.0000</div>
    {STATUS_L.map((n, i) => (
      <div key={n} className={`flex h-full w-[22px] shrink-0 items-center justify-center border-l border-[#444] ${i >= 5 && i <= 7 ? "bg-[linear-gradient(#d6e8f0,#8cc0d4)]" : "bg-[linear-gradient(#aeaeae,#8e8e8e)]"}`}>
        <Ic n={n} s={18} />
      </div>
    ))}
    <div className="ml-[411px] flex h-full shrink-0 items-center border-l border-[#444] bg-[linear-gradient(#bbb,#8e8e8e)] text-[12px] text-black">
      <span className="w-[27px] text-center text-[13px] leading-none">模型</span>
      <div className="flex h-full w-[23px] items-center justify-center border-l border-[#555]"><Ic n="smodel" s={18} /></div>
      <div className="flex h-full w-[24px] items-center justify-center border-l border-[#555]"><Ic n="slayout" s={18} /></div>
      <div className="h-full w-[17px] border-x border-[#555] bg-[#7a7a7a]" />
      <div className="flex h-full w-[52px] items-center pl-[5px]">
        <Ic n="anno" s={18} />
        <span className="ml-[3px] font-['Liberation_Mono']">1:1</span>
        <span className="ml-[1px] text-[8px]">▼</span>
      </div>
      <div className="flex h-full w-[22px] items-center justify-center border-l border-[#555]"><Ic n="annovis" s={18} /></div>
      <div className="flex h-full w-[22px] items-center justify-center border-r border-[#555]"><Ic n="annoadd" s={18} /></div>
      <div className="h-full w-[4px] bg-[#555]" />
      <div className="flex h-full w-[23px] items-center justify-center"><Ic n="gear" s={18} /></div>
      <div className="flex h-full w-[22px] items-center justify-center border-l border-[#555]"><Ic n="wslock" s={18} /></div>
      <div className="flex h-full w-[23px] items-center justify-center border-l border-[#555]"><Ic n="hw" s={18} /></div>
      <div className="flex h-full w-[26px] items-center justify-center border border-[#444] bg-[linear-gradient(90deg,#777,#aaa)]"><Ic n="lamp" s={18} /></div>
      <div className="h-full w-[4px] bg-[#555]" />
      <span className="w-[10px] text-center text-[8px]">▼</span>
      <div className="flex h-full flex-1 items-center justify-center"><Ic n="win" s={18} /></div>
    </div>
  </div>
);

const CommandArea = () => (
  <div className="mt-[8px] flex h-[56px] shrink-0">
    <div className="flex w-[22px] shrink-0 flex-col items-center bg-[#484848] text-white">
      <div className="mt-[3px] h-[6px] w-[16px] bg-[repeating-linear-gradient(90deg,#aaa_0_2px,#484848_2px_3px)]" />
      <span className="mt-[4px] text-[15px] font-bold leading-[17px]">×</span>
      <div className="mt-[8px]"><Ic n="wrench" s={16} /></div>
    </div>
    <div className="flex flex-1 flex-col">
      <div className="h-[33px] shrink-0 border-b border-[#555] bg-[#c6c6c6] pl-[3px] pt-[1px] font-['Liberation_Mono','Noto_Sans_CJK_SC'] text-[13px] leading-[16px] text-[#111]">
        <div>选择要扫掠的对象或 [模式(MO)]:</div>
        <div>选择扫掠路径或 [对齐(A)/基点(B)/比例(S)/扭曲(T)]:</div>
      </div>
      <div className="flex flex-1 items-center border-b border-[#333] bg-white pl-[5px]">
        <Ic n="prompt" s={16} />
        <span className="ml-[2px] text-[8px] text-[#888]">▼</span>
        <span className="ml-[10px] text-[12px] italic tracking-[1.5px] text-[#a0a0a0]">键入命令</span>
      </div>
    </div>
  </div>
);

const Watermark = () => (
  <svg className="pointer-events-none absolute left-0 top-0" width={1280} height={983} viewBox="0 0 1280 983">
    <g fill="#fff" fillOpacity={0.6}>
      <text x={983} y={917} fontSize={51} fontWeight={700} letterSpacing={-2} fontFamily="Liberation Sans">Bai</text>
      <ellipse cx={1069} cy={873} rx={8} ry={12.5} transform="rotate(-15 1069 873)" />
      <ellipse cx={1086} cy={857} rx={7} ry={11} transform="rotate(-5 1086 857)" />
      <ellipse cx={1104} cy={859} rx={7} ry={11} transform="rotate(8 1104 859)" />
      <ellipse cx={1119} cy={878} rx={8} ry={12.5} transform="rotate(15 1119 878)" />
      <path d="M1095 877c8 0 12 8 17 14s9 10 7 18c-2 7-9 8-15 7-6-1-11-2-17 0-7 1-13 0-14-7-2-8 4-13 8-18s6-14 14-14z" />
      <text x={1129} y={913} fontSize={37} fontWeight={700} fontFamily="Noto Sans CJK SC">经验</text>
    </g>
    <text x={1077} y={911} fontSize={20} fontWeight={700} fill="#6e6e6e" fillOpacity={0.7} fontFamily="Liberation Sans">du</text>
    <text x={985} y={948} fontSize={28} fontFamily="Liberation Sans" fill="#fff" fillOpacity={0.6} stroke="#8a8a8a" strokeOpacity={0.55} strokeWidth={0.7}>jingyan.baidu.com</text>
  </svg>
);

export default function App() {
  return (
    <div className="relative flex h-[983px] w-[1280px] flex-col overflow-hidden bg-[#666666] [font-family:'Liberation_Sans','Noto_Sans_CJK_SC',sans-serif]">
      <div className="flex h-[44px] shrink-0">
        <AppButton />
        <div className="flex min-w-0 flex-1 flex-col">
          <TitleBar />
          <MenuBar />
        </div>
      </div>

      <div className="mt-px flex h-[24px] shrink-0 pl-px">
        <Bar className="w-[645px]">
          <Grip />
          <Icons items="new open save | print preview plot publish | cut copy paste match bedit | undo v redo v || pan zrt zwin zprev | props dc tp ssm markup calc | help" />
        </Bar>
        <Bar className="w-[600px] bg-[#e6e6e6]">
          <Grip />
          <div className="flex h-full w-[27px] items-center justify-center"><Ic n="astyle" /></div>
          <Combo className="w-[118px] justify-center pl-[17px]">Standard</Combo>
          <div className="flex h-full w-[30px] items-center justify-center"><Ic n="dstyle" /></div>
          <Combo className="w-[119px] pl-[18px]">ISO-25</Combo>
          <div className="flex h-full w-[31px] items-center justify-center"><Ic n="tstyle" /></div>
          <Combo className="w-[118px] pl-[3px]">Standard</Combo>
          <div className="flex h-full w-[31px] items-center justify-center"><Ic n="mstyle" /></div>
          <Combo className="w-[118px] pl-[17px]">Standard</Combo>
        </Bar>
      </div>

      <div className="mt-[3px] flex h-[24px] shrink-0 pl-px">
        <Bar className="w-[230px]">
          <Grip />
          <Combo className="ml-px w-[173px] pl-[8px]">AutoCAD 经典</Combo>
          <div className="ml-[2px] flex h-full"><Icons items="gear wssave" /></div>
        </Bar>
        <Bar className="ml-px w-[401px]">
          <Grip />
          <Icons items="layer" />
          <Combo className="ml-px w-[299px] pl-[2px]">
            <Ic n="lamp" s={18} />
            <Ic n="sun" s={17} />
            <Ic n="freeze" s={17} />
            <Ic n="lock" s={17} />
            <div className="ml-[1px] h-[10px] w-[10px] border border-black bg-white" />
            <span className="ml-[4px] text-[12px]">0</span>
          </Combo>
          <Icons items="lmake lcur lprev" />
        </Bar>
        <Bar className="ml-[3px] w-[580px] bg-[#dcdcdc]">
          <Grip />
          <Combo className="ml-px w-[146px] pl-[4px]">
            <div className="mr-[3px] h-[9px] w-[9px] border border-black bg-white" />
            <Sub />
          </Combo>
          <div className="w-[10px]" />
          <Combo className="w-[158px] gap-[6px] pl-[4px]">
            <Line w="w-[59px]" />
            <Sub />
          </Combo>
          <div className="w-[8px]" />
          <Combo className="w-[122px] gap-[5px] pl-[4px]">
            <Line w="w-[34px]" />
            <Sub />
          </Combo>
          <div className="w-[9px]" />
          <Combo off className="w-[118px] pl-[8px] font-['Liberation_Serif'] !text-[11px] !text-[#8a8a8a]">BYCOLOR</Combo>
        </Bar>
      </div>

      <div className="mt-[3px] flex h-[24px] shrink-0 pl-px">
        <Bar className="w-[532px]">
          <Grip />
          <Icons items="psolid box wedge cone sphere cyl torus pyr helix planar | extr press sweep rev loft | union subt inters | gizmo gizrot align3 arr3" />
        </Bar>
        <Bar className="ml-[2px] w-[486px]">
          <Grip />
          <Icons items="union subt inters | eface mvface cpface xface rface tface cp2 dots | ededge chface cpedge dots | imprint clean sep3 shell check" />
        </Bar>
        <Bar className="ml-px w-[158px]">
          <Grip />
          <Icons items="inter2 | wire hidden rblue rgold | vstyle" />
        </Bar>
      </div>

      <div className="mt-[3px] flex h-[24px] shrink-0 pl-px">
        <Bar className="w-[471px]">
          <Grip />
          <Icons items="uopen | v1 v2 v3 v4 v5 v6 | iso1 iso2 iso3 iso4 | camera | search" />
          <div className="ml-[2px] flex h-[22px] w-[138px] items-center justify-end rounded-[3px] border border-[#ccc] bg-[#f6f6f6] pr-[4px] text-[9px] text-[#aaa]">▼</div>
        </Bar>
      </div>

      <div className="mt-[5px] flex h-[713px] shrink-0">
        <div className="w-[29px] shrink-0 pl-px">
          <div className="flex w-[24px] flex-col items-center border border-[#2e2e2e] bg-[#efefef]">
            <HGrip />
            {"line xline pline polygon rect arc circle cloud spline ellipse ellarc insert block point hatch grad region table mtext addsel".split(" ").map((n) => (
              <div key={n} className="flex h-[22px] items-center justify-center"><Ic n={n} /></div>
            ))}
          </div>
        </div>
        <div className="flex w-[1218px] shrink-0 flex-col border-l-2 border-[#8c8c8c]">
          <div className="flex h-[697px] shrink-0">
            <div className="relative flex-1 bg-[#212831]">
              <Scene />
              <span className="absolute left-[4px] top-[7px] text-[12.5px] leading-[14px] text-[#dcdcdc]">[−][西南等轴测][真实]</span>
            </div>
            <ScrollV />
          </div>
          <TabRow />
        </div>
        <div className="flex flex-1 flex-col gap-[2px] pl-[6px]">
          <div className="flex w-[24px] flex-col items-center border border-[#2e2e2e] bg-[#efefef]">
            <HGrip />
            {"erase copyobj mirror offset array move rotate scale stretch trim extend brk1 brk2 join chamfer fillet edspl explode".split(" ").map((n) => (
              <div key={n} className="flex h-[22px] items-center justify-center"><Ic n={n} /></div>
            ))}
          </div>
          <div className="flex w-[24px] flex-col items-center border border-[#2e2e2e] bg-[#efefef]">
            <HGrip />
            {"do1 do2 do3 do4".split(" ").map((n) => (
              <div key={n} className="flex h-[22px] items-center justify-center"><Ic n={n} /></div>
            ))}
            <div className="my-[4px] h-px w-[20px] bg-[#999]" />
            {"tfront hback".split(" ").map((n) => (
              <div key={n} className="flex h-[22px] items-center justify-center"><Ic n={n} /></div>
            ))}
          </div>
        </div>
      </div>

      <div className="mt-[5px] flex h-[24px] shrink-0 pl-[29px]">
        <Bar className="w-[642px]">
          <div className="w-px bg-[#484848]" />
          <Grip />
          <Icons items="dlin dali darc dord | drad djog ddia dang | dqk dbase dcont dspc dbrk | dtol dctr dins dj2 | ded dte dup" />
          <Combo className="ml-[6px] w-[120px] pl-[18px]">ISO-25</Combo>
          <div className="flex h-full w-[23px] items-center justify-center"><Ic n="dstyle" /></div>
        </Bar>
      </div>

      <CommandArea />
      <div className="mt-[2px]"><StatusBar /></div>
      <Watermark />
    </div>
  );
}
